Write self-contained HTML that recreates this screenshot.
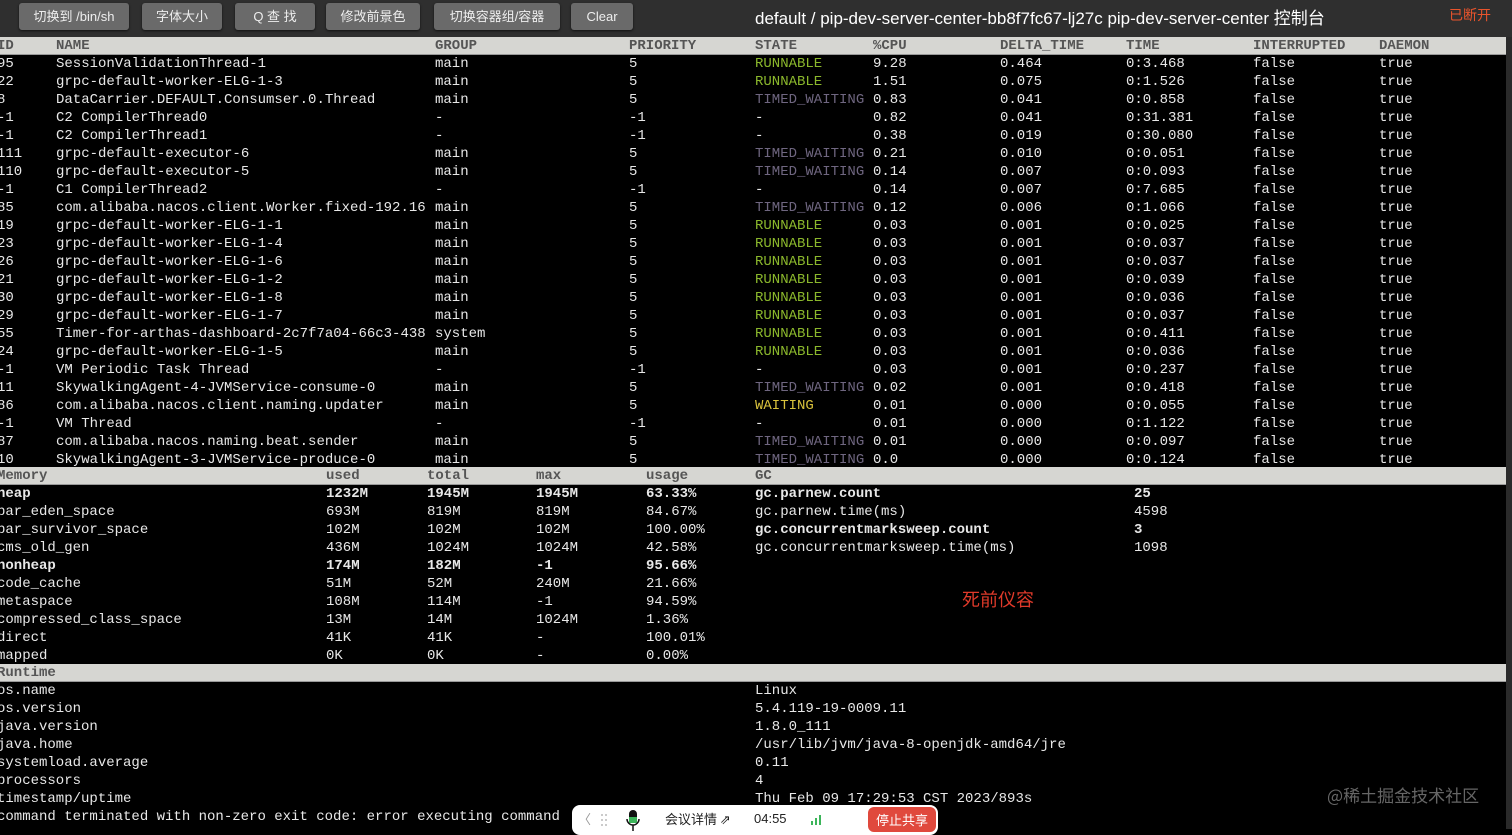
<!DOCTYPE html>
<html><head><meta charset="utf-8"><style>
*{margin:0;padding:0;box-sizing:border-box}
body{width:1512px;height:829px;background:#000;overflow:hidden;position:relative;font-family:"Liberation Mono",monospace;font-size:14px;color:#e8e8e8}
#top{position:absolute;left:0;top:0;width:1512px;height:37px;background:#2f2f2f}
.btn{position:absolute;top:3px;height:27px;background:#6a6a6a;border-radius:3px;color:#eee;font:13px "Liberation Sans","Noto Sans CJK SC",sans-serif;line-height:27px;text-align:center;box-shadow:0 1px 2px #111}
#title{position:absolute;left:755px;top:4px;color:#fff;font:17px "Liberation Sans","Noto Sans CJK SC",sans-serif}
#disc{position:absolute;left:1449px;top:5px;color:#e8542c;font:14px "Noto Sans CJK SC",sans-serif}
#rs{position:absolute;left:1506px;top:37px;width:6px;height:792px;background:#2a2a2a}
.r{position:absolute;left:0;width:1506px;height:18px;line-height:18px;white-space:pre}
.r span{position:absolute;top:0}
.h{background:#d6d6d2;color:#555;font-weight:bold;border-bottom:1px solid #999}
.g{color:#8bb82c}.p{color:#6f6680}.y{color:#d9c23c}.b{font-weight:bold}
</style></head><body>
<div id="top">
<div class="btn" style="left:19px;width:110px">切换到 /bin/sh</div>
<div class="btn" style="left:142px;width:80px">字体大小</div>
<div class="btn" style="left:235px;width:80px">Q 查 找</div>
<div class="btn" style="left:326px;width:94px">修改前景色</div>
<div class="btn" style="left:434px;width:126px">切换容器组/容器</div>
<div class="btn" style="left:571px;width:62px">Clear</div>
<div id="title">default / pip-dev-server-center-bb8f7fc67-lj27c pip-dev-server-center 控制台</div>
<div id="disc">已断开</div>
</div>
<div id="rs"></div>

<div class="r h" style="top:37px"><span style="left:-3px">ID</span><span style="left:56px">NAME</span><span style="left:435px">GROUP</span><span style="left:629px">PRIORITY</span><span style="left:755px">STATE</span><span style="left:873px">%CPU</span><span style="left:1000px">DELTA_TIME</span><span style="left:1126px">TIME</span><span style="left:1253px">INTERRUPTED</span><span style="left:1379px">DAEMON</span></div>

<div class="r" style="top:55px"><span style="left:-3px">95</span><span style="left:56px">SessionValidationThread-1</span><span style="left:435px">main</span><span style="left:629px">5</span><span style="left:755px" class="g">RUNNABLE</span><span style="left:873px">9.28</span><span style="left:1000px">0.464</span><span style="left:1126px">0:3.468</span><span style="left:1253px">false</span><span style="left:1379px">true</span></div>
<div class="r" style="top:73px"><span style="left:-3px">22</span><span style="left:56px">grpc-default-worker-ELG-1-3</span><span style="left:435px">main</span><span style="left:629px">5</span><span style="left:755px" class="g">RUNNABLE</span><span style="left:873px">1.51</span><span style="left:1000px">0.075</span><span style="left:1126px">0:1.526</span><span style="left:1253px">false</span><span style="left:1379px">true</span></div>
<div class="r" style="top:91px"><span style="left:-3px">8</span><span style="left:56px">DataCarrier.DEFAULT.Consumser.0.Thread</span><span style="left:435px">main</span><span style="left:629px">5</span><span style="left:755px" class="p">TIMED_WAITING</span><span style="left:873px">0.83</span><span style="left:1000px">0.041</span><span style="left:1126px">0:0.858</span><span style="left:1253px">false</span><span style="left:1379px">true</span></div>
<div class="r" style="top:109px"><span style="left:-3px">-1</span><span style="left:56px">C2 CompilerThread0</span><span style="left:435px">-</span><span style="left:629px">-1</span><span style="left:755px">-</span><span style="left:873px">0.82</span><span style="left:1000px">0.041</span><span style="left:1126px">0:31.381</span><span style="left:1253px">false</span><span style="left:1379px">true</span></div>
<div class="r" style="top:127px"><span style="left:-3px">-1</span><span style="left:56px">C2 CompilerThread1</span><span style="left:435px">-</span><span style="left:629px">-1</span><span style="left:755px">-</span><span style="left:873px">0.38</span><span style="left:1000px">0.019</span><span style="left:1126px">0:30.080</span><span style="left:1253px">false</span><span style="left:1379px">true</span></div>
<div class="r" style="top:145px"><span style="left:-3px">111</span><span style="left:56px">grpc-default-executor-6</span><span style="left:435px">main</span><span style="left:629px">5</span><span style="left:755px" class="p">TIMED_WAITING</span><span style="left:873px">0.21</span><span style="left:1000px">0.010</span><span style="left:1126px">0:0.051</span><span style="left:1253px">false</span><span style="left:1379px">true</span></div>
<div class="r" style="top:163px"><span style="left:-3px">110</span><span style="left:56px">grpc-default-executor-5</span><span style="left:435px">main</span><span style="left:629px">5</span><span style="left:755px" class="p">TIMED_WAITING</span><span style="left:873px">0.14</span><span style="left:1000px">0.007</span><span style="left:1126px">0:0.093</span><span style="left:1253px">false</span><span style="left:1379px">true</span></div>
<div class="r" style="top:181px"><span style="left:-3px">-1</span><span style="left:56px">C1 CompilerThread2</span><span style="left:435px">-</span><span style="left:629px">-1</span><span style="left:755px">-</span><span style="left:873px">0.14</span><span style="left:1000px">0.007</span><span style="left:1126px">0:7.685</span><span style="left:1253px">false</span><span style="left:1379px">true</span></div>
<div class="r" style="top:199px"><span style="left:-3px">85</span><span style="left:56px">com.alibaba.nacos.client.Worker.fixed-192.16</span><span style="left:435px">main</span><span style="left:629px">5</span><span style="left:755px" class="p">TIMED_WAITING</span><span style="left:873px">0.12</span><span style="left:1000px">0.006</span><span style="left:1126px">0:1.066</span><span style="left:1253px">false</span><span style="left:1379px">true</span></div>
<div class="r" style="top:217px"><span style="left:-3px">19</span><span style="left:56px">grpc-default-worker-ELG-1-1</span><span style="left:435px">main</span><span style="left:629px">5</span><span style="left:755px" class="g">RUNNABLE</span><span style="left:873px">0.03</span><span style="left:1000px">0.001</span><span style="left:1126px">0:0.025</span><span style="left:1253px">false</span><span style="left:1379px">true</span></div>
<div class="r" style="top:235px"><span style="left:-3px">23</span><span style="left:56px">grpc-default-worker-ELG-1-4</span><span style="left:435px">main</span><span style="left:629px">5</span><span style="left:755px" class="g">RUNNABLE</span><span style="left:873px">0.03</span><span style="left:1000px">0.001</span><span style="left:1126px">0:0.037</span><span style="left:1253px">false</span><span style="left:1379px">true</span></div>
<div class="r" style="top:253px"><span style="left:-3px">26</span><span style="left:56px">grpc-default-worker-ELG-1-6</span><span style="left:435px">main</span><span style="left:629px">5</span><span style="left:755px" class="g">RUNNABLE</span><span style="left:873px">0.03</span><span style="left:1000px">0.001</span><span style="left:1126px">0:0.037</span><span style="left:1253px">false</span><span style="left:1379px">true</span></div>
<div class="r" style="top:271px"><span style="left:-3px">21</span><span style="left:56px">grpc-default-worker-ELG-1-2</span><span style="left:435px">main</span><span style="left:629px">5</span><span style="left:755px" class="g">RUNNABLE</span><span style="left:873px">0.03</span><span style="left:1000px">0.001</span><span style="left:1126px">0:0.039</span><span style="left:1253px">false</span><span style="left:1379px">true</span></div>
<div class="r" style="top:289px"><span style="left:-3px">30</span><span style="left:56px">grpc-default-worker-ELG-1-8</span><span style="left:435px">main</span><span style="left:629px">5</span><span style="left:755px" class="g">RUNNABLE</span><span style="left:873px">0.03</span><span style="left:1000px">0.001</span><span style="left:1126px">0:0.036</span><span style="left:1253px">false</span><span style="left:1379px">true</span></div>
<div class="r" style="top:307px"><span style="left:-3px">29</span><span style="left:56px">grpc-default-worker-ELG-1-7</span><span style="left:435px">main</span><span style="left:629px">5</span><span style="left:755px" class="g">RUNNABLE</span><span style="left:873px">0.03</span><span style="left:1000px">0.001</span><span style="left:1126px">0:0.037</span><span style="left:1253px">false</span><span style="left:1379px">true</span></div>
<div class="r" style="top:325px"><span style="left:-3px">55</span><span style="left:56px">Timer-for-arthas-dashboard-2c7f7a04-66c3-438</span><span style="left:435px">system</span><span style="left:629px">5</span><span style="left:755px" class="g">RUNNABLE</span><span style="left:873px">0.03</span><span style="left:1000px">0.001</span><span style="left:1126px">0:0.411</span><span style="left:1253px">false</span><span style="left:1379px">true</span></div>
<div class="r" style="top:343px"><span style="left:-3px">24</span><span style="left:56px">grpc-default-worker-ELG-1-5</span><span style="left:435px">main</span><span style="left:629px">5</span><span style="left:755px" class="g">RUNNABLE</span><span style="left:873px">0.03</span><span style="left:1000px">0.001</span><span style="left:1126px">0:0.036</span><span style="left:1253px">false</span><span style="left:1379px">true</span></div>
<div class="r" style="top:361px"><span style="left:-3px">-1</span><span style="left:56px">VM Periodic Task Thread</span><span style="left:435px">-</span><span style="left:629px">-1</span><span style="left:755px">-</span><span style="left:873px">0.03</span><span style="left:1000px">0.001</span><span style="left:1126px">0:0.237</span><span style="left:1253px">false</span><span style="left:1379px">true</span></div>
<div class="r" style="top:379px"><span style="left:-3px">11</span><span style="left:56px">SkywalkingAgent-4-JVMService-consume-0</span><span style="left:435px">main</span><span style="left:629px">5</span><span style="left:755px" class="p">TIMED_WAITING</span><span style="left:873px">0.02</span><span style="left:1000px">0.001</span><span style="left:1126px">0:0.418</span><span style="left:1253px">false</span><span style="left:1379px">true</span></div>
<div class="r" style="top:397px"><span style="left:-3px">86</span><span style="left:56px">com.alibaba.nacos.client.naming.updater</span><span style="left:435px">main</span><span style="left:629px">5</span><span style="left:755px" class="y">WAITING</span><span style="left:873px">0.01</span><span style="left:1000px">0.000</span><span style="left:1126px">0:0.055</span><span style="left:1253px">false</span><span style="left:1379px">true</span></div>
<div class="r" style="top:415px"><span style="left:-3px">-1</span><span style="left:56px">VM Thread</span><span style="left:435px">-</span><span style="left:629px">-1</span><span style="left:755px">-</span><span style="left:873px">0.01</span><span style="left:1000px">0.000</span><span style="left:1126px">0:1.122</span><span style="left:1253px">false</span><span style="left:1379px">true</span></div>
<div class="r" style="top:433px"><span style="left:-3px">87</span><span style="left:56px">com.alibaba.nacos.naming.beat.sender</span><span style="left:435px">main</span><span style="left:629px">5</span><span style="left:755px" class="p">TIMED_WAITING</span><span style="left:873px">0.01</span><span style="left:1000px">0.000</span><span style="left:1126px">0:0.097</span><span style="left:1253px">false</span><span style="left:1379px">true</span></div>
<div class="r" style="top:451px"><span style="left:-3px">10</span><span style="left:56px">SkywalkingAgent-3-JVMService-produce-0</span><span style="left:435px">main</span><span style="left:629px">5</span><span style="left:755px" class="p">TIMED_WAITING</span><span style="left:873px">0.0</span><span style="left:1000px">0.000</span><span style="left:1126px">0:0.124</span><span style="left:1253px">false</span><span style="left:1379px">true</span></div>

<div class="r h" style="top:467px"><span style="left:-3px">Memory</span><span style="left:326px">used</span><span style="left:427px">total</span><span style="left:536px">max</span><span style="left:646px">usage</span><span style="left:755px">GC</span></div>
<div class="r b" style="top:485px"><span style="left:-3px">heap</span><span style="left:326px">1232M</span><span style="left:427px">1945M</span><span style="left:536px">1945M</span><span style="left:646px">63.33%</span><span style="left:755px">gc.parnew.count</span><span style="left:1134px">25</span></div>
<div class="r" style="top:503px"><span style="left:-3px">par_eden_space</span><span style="left:326px">693M</span><span style="left:427px">819M</span><span style="left:536px">819M</span><span style="left:646px">84.67%</span><span style="left:755px">gc.parnew.time(ms)</span><span style="left:1134px">4598</span></div>
<div class="r" style="top:521px"><span style="left:-3px">par_survivor_space</span><span style="left:326px">102M</span><span style="left:427px">102M</span><span style="left:536px">102M</span><span style="left:646px">100.00%</span><span style="left:755px" class="b">gc.concurrentmarksweep.count</span><span style="left:1134px" class="b">3</span></div>
<div class="r" style="top:539px"><span style="left:-3px">cms_old_gen</span><span style="left:326px">436M</span><span style="left:427px">1024M</span><span style="left:536px">1024M</span><span style="left:646px">42.58%</span><span style="left:755px">gc.concurrentmarksweep.time(ms)</span><span style="left:1134px">1098</span></div>
<div class="r b" style="top:557px"><span style="left:-3px">nonheap</span><span style="left:326px">174M</span><span style="left:427px">182M</span><span style="left:536px">-1</span><span style="left:646px">95.66%</span></div>
<div class="r" style="top:575px"><span style="left:-3px">code_cache</span><span style="left:326px">51M</span><span style="left:427px">52M</span><span style="left:536px">240M</span><span style="left:646px">21.66%</span></div>
<div class="r" style="top:593px"><span style="left:-3px">metaspace</span><span style="left:326px">108M</span><span style="left:427px">114M</span><span style="left:536px">-1</span><span style="left:646px">94.59%</span></div>
<div class="r" style="top:611px"><span style="left:-3px">compressed_class_space</span><span style="left:326px">13M</span><span style="left:427px">14M</span><span style="left:536px">1024M</span><span style="left:646px">1.36%</span></div>
<div class="r" style="top:629px"><span style="left:-3px">direct</span><span style="left:326px">41K</span><span style="left:427px">41K</span><span style="left:536px">-</span><span style="left:646px">100.01%</span></div>
<div class="r" style="top:647px"><span style="left:-3px">mapped</span><span style="left:326px">0K</span><span style="left:427px">0K</span><span style="left:536px">-</span><span style="left:646px">0.00%</span></div>
<div style="position:absolute;left:962px;top:586px;color:#e03a2a;font:18px 'Noto Sans CJK SC',sans-serif">死前仪容</div>

<div class="r h" style="top:664px"><span style="left:-3px">Runtime</span></div>
<div class="r" style="top:682px"><span style="left:-3px">os.name</span><span style="left:755px">Linux</span></div>
<div class="r" style="top:700px"><span style="left:-3px">os.version</span><span style="left:755px">5.4.119-19-0009.11</span></div>
<div class="r" style="top:718px"><span style="left:-3px">java.version</span><span style="left:755px">1.8.0_111</span></div>
<div class="r" style="top:736px"><span style="left:-3px">java.home</span><span style="left:755px">/usr/lib/jvm/java-8-openjdk-amd64/jre</span></div>
<div class="r" style="top:754px"><span style="left:-3px">systemload.average</span><span style="left:755px">0.11</span></div>
<div class="r" style="top:772px"><span style="left:-3px">processors</span><span style="left:755px">4</span></div>
<div class="r" style="top:790px"><span style="left:-3px">timestamp/uptime</span><span style="left:755px">Thu Feb 09 17:29:53 CST 2023/893s</span></div>
<div class="r" style="top:808px"><span style="left:-3px">command terminated with non-zero exit code: error executing command</span></div>

<div style="position:absolute;left:1327px;top:782px;color:#666;font:17px 'Noto Sans CJK SC',sans-serif">@稀土掘金技术社区</div>

<div style="position:absolute;left:572px;top:805px;width:366px;height:30px;background:#fff;border-radius:8px;font:13px 'Noto Sans CJK SC',sans-serif;color:#222">
<span style="position:absolute;left:6px;top:4px;color:#999">〈</span>
<svg style="position:absolute;left:28px;top:8px" width="8" height="14"><g fill="#bbb"><circle cx="2" cy="2" r="1"/><circle cx="6" cy="2" r="1"/><circle cx="2" cy="7" r="1"/><circle cx="6" cy="7" r="1"/><circle cx="2" cy="12" r="1"/><circle cx="6" cy="12" r="1"/></g></svg>
<svg style="position:absolute;left:53px;top:5px" width="16" height="22"><rect x="4" y="0" width="8" height="13" rx="4" fill="#111"/><rect x="4" y="7" width="8" height="6" fill="#3cb55a"/><path d="M2 9a6 6 0 0 0 12 0M8 15v6" stroke="#111" stroke-width="1.5" fill="none"/></svg>
<span style="position:absolute;left:93px;top:4px">会议详情 ⇗</span>
<span style="position:absolute;left:182px;top:6px;font-family:'Liberation Sans'">04:55</span>
<svg style="position:absolute;left:238px;top:9px" width="14" height="12"><g fill="#3cb55a"><rect x="1" y="7" width="2" height="4"/><rect x="5" y="4" width="2" height="7"/><rect x="9" y="1" width="2" height="10"/></g></svg>
<div style="position:absolute;left:296px;top:2px;width:68px;height:25px;background:#e0493d;border-radius:6px;color:#fff;text-align:center;line-height:25px">停止共享</div>
</div>
</body></html>
